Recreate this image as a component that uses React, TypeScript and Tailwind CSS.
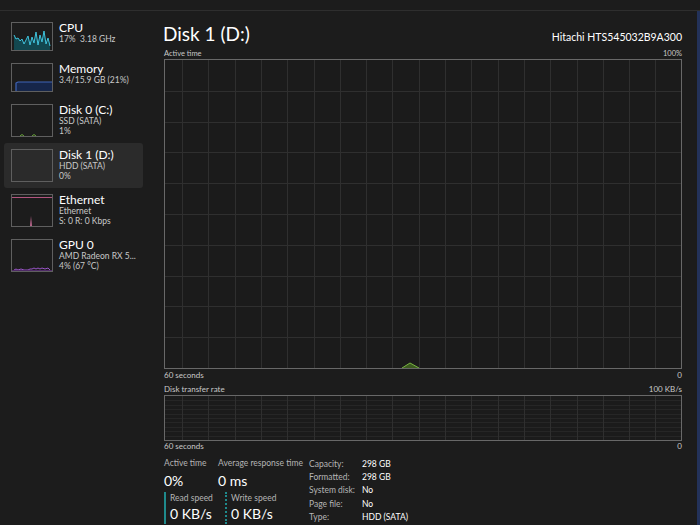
import React from 'react';

const font = { fontFamily: 'Lato, "Noto Sans", sans-serif' };

type Item = {
  title: string;
  lines: string[];
  tall: boolean;
  selected?: boolean;
  graph: 'cpu' | 'mem' | 'disk0' | 'disk1' | 'eth' | 'gpu';
};

const items: Item[] = [
  { title: 'CPU', lines: ['17%  3.18 GHz'], tall: false, graph: 'cpu' },
  { title: 'Memory', lines: ['3.4/15.9 GB (21%)'], tall: false, graph: 'mem' },
  { title: 'Disk 0 (C:)', lines: ['SSD (SATA)', '1%'], tall: true, graph: 'disk0' },
  { title: 'Disk 1 (D:)', lines: ['HDD (SATA)', '0%'], tall: true, selected: true, graph: 'disk1' },
  { title: 'Ethernet', lines: ['Ethernet', 'S: 0 R: 0 Kbps'], tall: true, graph: 'eth' },
  { title: 'GPU 0', lines: ['AMD Radeon RX 5...', '4% (67 °C)'], tall: true, graph: 'gpu' },
];

function Thumb({ kind, h }: { kind: Item['graph']; h: number }) {
  const w = 40;
  const b = h;
  return (
    <svg width={w} height={h} className="block">
      {kind === 'cpu' && (
        <>
          <polygon
            points={`2,${b} 2,12 4,16 6,15 8,18 10,16 12,21 14,17 16,13 18,22 20,14 22,20 24,9 26,22 28,12 30,19 32,8 34,21 36,15 38,23 38,${b}`}
            fill="#12474f"
          />
          <polyline
            points="2,12 4,16 6,15 8,18 10,16 12,21 14,17 16,13 18,22 20,14 22,20 24,9 26,22 28,12 30,19 32,8 34,21 36,15 38,23"
            fill="none"
            stroke="#3fc3dc"
            strokeWidth="1"
          />
        </>
      )}
      {kind === 'mem' && (
        <>
          <polygon points={`4,${b} 4,19 6,18 40,18 40,${b}`} fill="#16264a" />
          <polyline points={`4,${b} 4,19 6,18 40,18`} fill="none" stroke="#3f64b8" strokeWidth="1.2" />
        </>
      )}
      {kind === 'disk0' && (
        <>
          <polyline points={`8,${b} 10,${b - 1.5} 12,${b}`} fill="none" stroke="#6aa83a" strokeWidth="1" />
          <polyline points={`20,${b} 22,${b - 1.5} 24,${b}`} fill="none" stroke="#6aa83a" strokeWidth="1" />
        </>
      )}
      {kind === 'eth' && (
        <>
          <line x1="0" y1="2.5" x2="40" y2="2.5" stroke="#b3557f" strokeWidth="1.2" />
          <polygon points={`18,${b} 19,${b - 10} 20,${b}`} fill="#c06890" />
        </>
      )}
      {kind === 'gpu' && (
        <>
          <polyline
            points={`2,${b - 1} 4,${b - 2} 6,${b - 1} 9,${b - 2} 12,${b - 1} 16,${b - 1} 18,${b - 2} 20,${b - 2} 22,${b - 3} 24,${b - 2} 26,${b - 3} 28,${b - 2} 30,${b - 3} 33,${b - 2} 36,${b - 3} 38,${b - 1}`}
            fill="none"
            stroke="#9a54c8"
            strokeWidth="1"
          />
          <rect x="0" y={b - 1} width="40" height="1" fill="#4e2a66" />
        </>
      )}
    </svg>
  );
}

function Grid({ w, h, rows, lineColor, rowColor }: { w: number; h: number; rows: number; lineColor: string; rowColor: string }) {
  const cols: number[] = [];
  for (let k = 0; k < 19; k++) cols.push(17 + k * 26.3);
  const hs: number[] = [];
  for (let k = 1; k < rows; k++) hs.push((h * k) / rows);
  return (
    <svg width={w} height={h} className="block">
      {hs.map((y) => (
        <line key={'h' + y} x1="0" x2={w} y1={Math.round(y) + 0.5} y2={Math.round(y) + 0.5} stroke={rowColor} strokeWidth="1" />
      ))}
      {cols.map((x) => (
        <line key={'v' + x} x1={Math.round(x) + 0.5} x2={Math.round(x) + 0.5} y1="0" y2={h} stroke={lineColor} strokeWidth="1" />
      ))}
    </svg>
  );
}

function SideItem({ item }: { item: Item }) {
  const h = item.tall ? 33 : 29;
  return (
    <div
      className={`ml-[4px] mr-[7px] flex items-start gap-[6px] rounded-[3px] py-[6px] pl-[7px] ${item.selected ? 'bg-[#2b2b2b]' : ''}`}
    >
      <div className="border border-[#5f5f5f]" style={{ height: h }}>
        <Thumb kind={item.graph} h={h - 2} />
      </div>
      <div className="flex flex-col">
        <div className="text-[12px] leading-[12px] text-white">{item.title}</div>
        {item.lines.map((l) => (
          <div key={l} className="mt-[0.5px] whitespace-pre text-[8.5px] leading-[9.5px] text-[#c8c8c8]">
            {l}
          </div>
        ))}
      </div>
    </div>
  );
}

export default function App() {
  return (
    <div className="flex h-[525px] w-[700px] flex-col overflow-hidden bg-[#1c1c1c]" style={font}>
      <div className="h-[11px] shrink-0 border-b border-[#2e2e2e] bg-[#1c1c1c]" />
      <div className="flex flex-1">
        <aside className="flex w-[150px] flex-col pt-[5px]">
          {items.map((it) => (
            <SideItem key={it.title} item={it} />
          ))}
        </aside>
        <main className="flex w-[547px] flex-col pl-[14px] pr-[15px] pt-[9px]">
          <div className="flex items-baseline justify-between">
            <div className="-ml-[1px] text-[19px] leading-[28px] text-white">Disk 1 (D:)</div>
            <div className="text-[10.5px] text-white">Hitachi HTS545032B9A300</div>
          </div>
          <div className="flex justify-between text-[7.5px] leading-[11px] text-[#c8c8c8]">
            <span>Active time</span>
            <span>100%</span>
          </div>
          <div className="relative w-[518px] border border-[#686868] bg-[#1b1b1b]">
            <Grid w={516} h={308} rows={10} lineColor="#2f2f2f" rowColor="#2f2f2f" />
            <svg width="20" height="7" className="absolute bottom-0 left-[236px]">
              <polygon points="1,7 9,2 18,7" fill="#3c5a20" />
              <polyline points="1,7 9,2 18,7" fill="none" stroke="#79b443" strokeWidth="1" />
            </svg>
          </div>
          <div className="mt-[1px] flex justify-between text-[8px] leading-[11px] text-[#c8c8c8]">
            <span>60 seconds</span>
            <span>0</span>
          </div>
          <div className="mt-[3px] flex justify-between text-[8px] leading-[11px] text-[#c8c8c8]">
            <span>Disk transfer rate</span>
            <span>100 KB/s</span>
          </div>
          <div className="w-[518px] border border-[#686868] bg-[#1b1b1b]">
            <Grid w={516} h={44} rows={10} lineColor="#2f2f2f" rowColor="#262626" />
          </div>
          <div className="flex justify-between text-[8px] leading-[11px] text-[#c8c8c8]">
            <span>60 seconds</span>
            <span>0</span>
          </div>

          <div className="mt-[6px] flex">
            <div className="flex w-[145px] flex-col">
              <div className="flex">
                <div className="w-[54px]">
                  <div className="text-[8.5px] leading-[11px] text-[#b4b4b4]">Active time</div>
                  <div className="mt-[2px] text-[14px] leading-[20px] text-white">0%</div>
                </div>
                <div>
                  <div className="whitespace-nowrap text-[8.5px] leading-[11px] text-[#b4b4b4]">Average response time</div>
                  <div className="mt-[2px] text-[14px] leading-[20px] text-white">0 ms</div>
                </div>
              </div>
              <div className="mt-[1px] flex">
                <div className="w-[61px] border-l-2 border-[#1f8a8c] pl-[4px]">
                  <div className="pt-[1px] text-[8.5px] leading-[11px] text-[#b4b4b4]">Read speed</div>
                  <div className="text-[14px] leading-[20px] text-white">0 KB/s</div>
                </div>
                <div className="border-l-2 border-dotted border-[#1f8a8c] pl-[4px]">
                  <div className="pt-[1px] text-[8.5px] leading-[11px] text-[#b4b4b4]">Write speed</div>
                  <div className="text-[14px] leading-[20px] text-white">0 KB/s</div>
                </div>
              </div>
            </div>
            <div className="grid grid-cols-[53px_auto] text-[8.5px] leading-[12.25px]">
              <span className="text-[#b4b4b4]">Capacity:</span>
              <span className="text-white">298 GB</span>
              <span className="text-[#b4b4b4]">Formatted:</span>
              <span className="text-white">298 GB</span>
              <span className="text-[#b4b4b4]">System disk:</span>
              <span className="text-white">No</span>
              <span className="text-[#b4b4b4]">Page file:</span>
              <span className="text-white">No</span>
              <span className="text-[#b4b4b4]">Type:</span>
              <span className="text-white">HDD (SATA)</span>
            </div>
          </div>
        </main>
        <div className="w-[3px] bg-[#23325a]" />
      </div>
    </div>
  );
}
